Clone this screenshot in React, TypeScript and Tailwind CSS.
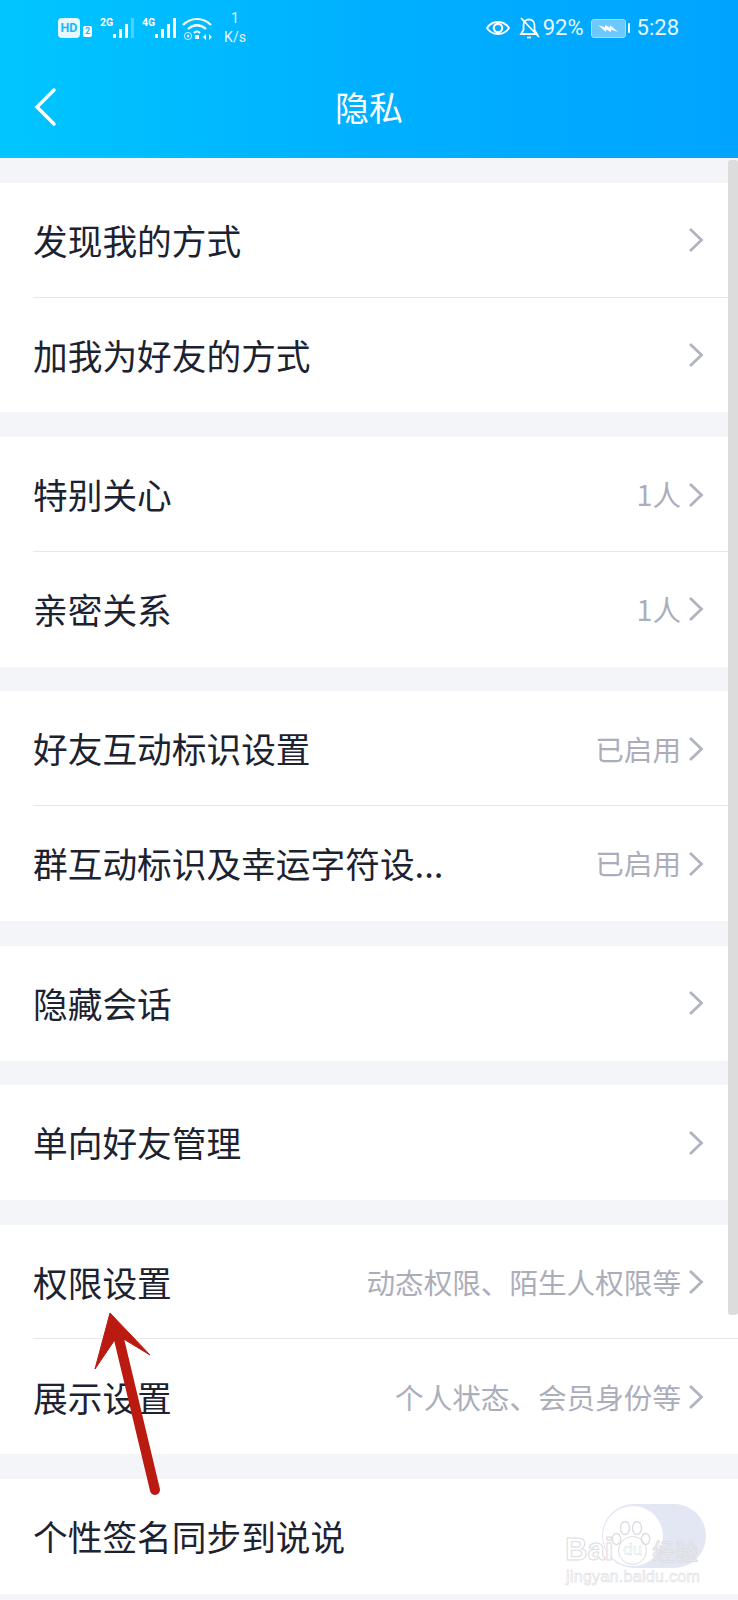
import React from "react";

const cjk = { fontFamily: '"Noto Sans CJK SC", "Noto Sans", sans-serif' };

function Chevron() {
  return (
    <svg width="16" height="26" viewBox="0 0 16 26" fill="none" className="shrink-0">
      <path d="M2 2 L13.5 13 L2 24" stroke="#b0b3c0" strokeWidth="2.8" />
    </svg>
  );
}

function Row({ title, value, divider }: { title: string; value?: string; divider?: boolean }) {
  return (
    <div className="relative flex h-[114.8px] items-center pl-[33px] pr-[34px]">
      <span className="flex-1 text-[34.7px] leading-none text-[#1c2230]">{title}</span>
      {value && <span className="mr-[7px] text-[28.6px] leading-none text-[#abaeba]">{value}</span>}
      <Chevron />
      {divider && <div className="absolute bottom-0 left-[33px] right-0 h-px bg-[#e8e8ec]" />}
    </div>
  );
}

function Group({ children }: { children: React.ReactNode }) {
  return <div className="mt-[24.7px] bg-white">{children}</div>;
}

function Bars({ label, dim }: { label: string; dim: number }) {
  const hs = [4, 9, 14, 20];
  return (
    <div className="flex items-end">
      <span className="mb-[10px] mr-[1px] w-[12px] text-[10.5px] font-bold leading-none text-white" style={{ fontFamily: "Roboto, sans-serif" }}>{label}</span>
      <div className="flex items-end gap-[3px]">
        {hs.map((h, i) => (
          <div key={i} className={i >= 4 - dim ? "w-[3px] bg-white/30" : "w-[3px] bg-white"} style={{ height: h }} />
        ))}
      </div>
    </div>
  );
}

export default function App() {
  return (
    <div className="relative h-[1600px] w-[738px] overflow-hidden bg-[#f3f5f9]" style={cjk}>
      <header className="h-[158.2px] bg-gradient-to-r from-[#00c6ff] via-[#00b0ff] to-[#00a4ff] text-white">
        <div className="flex h-[56px] items-center justify-between pl-[58px] pr-[59px]">
          <div className="flex items-center">
            <div className="flex h-[20px] w-[22px] items-center justify-center rounded-[4px] bg-[#e6f8ff] text-[12.5px] font-bold leading-none text-[#19b8fb]" style={{ fontFamily: "Roboto, sans-serif" }}>HD</div>
            <div className="ml-[3px] mt-[7px] flex h-[11px] w-[9px] items-center justify-center rounded-[2px] bg-white text-[9px] font-bold leading-none text-[#19b8fb]" style={{ fontFamily: "Roboto, sans-serif" }}>2</div>
            <div className="ml-[8px]"><Bars label="2G" dim={1} /></div>
            <div className="ml-[8px]"><Bars label="4G" dim={0} /></div>
            <svg width="32" height="24" viewBox="0 0 32 24" fill="none" stroke="white" className="ml-[5px]">
              <path d="M2 9 C10 1 22 1 30 9" strokeWidth="2.2" />
              <path d="M7 13 C13 8 19 8 25 13" strokeWidth="2.2" />
              <path d="M13 17 C15 15 17 15 19 17" strokeWidth="2" />
              <circle cx="7" cy="20" r="3.6" strokeWidth="1" opacity=".8" />
              <circle cx="7" cy="20" r="1.2" fill="white" stroke="none" />
              <rect x="14" y="19" width="4" height="4" fill="white" stroke="none" />
              <path d="M22 21 l3 -3 v6 z M31 21 l-3 -3 v6 z" fill="white" stroke="none" />
            </svg>
            <div className="-mt-[1px] ml-[10px] flex w-[24px] flex-col items-center text-[14px] leading-[19px] text-[#e4f6ff]" style={{ fontFamily: "Roboto, sans-serif" }}>
              <span>1</span>
              <span>K/s</span>
            </div>
          </div>
          <div className="flex items-center text-[#e9f8ff]" style={{ fontFamily: "Roboto, sans-serif" }}>
            <svg width="24" height="18" viewBox="0 0 24 18" fill="none" stroke="white">
              <path d="M1 9 C6 1 18 1 23 9 C18 17 6 17 1 9 Z" strokeWidth="1.8" />
              <circle cx="12" cy="9" r="4.2" strokeWidth="2.2" />
            </svg>
            <svg width="21" height="22" viewBox="0 0 21 22" fill="none" stroke="white" strokeWidth="1.8" className="ml-[9px]">
              <path d="M2 17 H18 L15.5 13 V8 C15.5 4.5 13 2.5 10 2.5 C7 2.5 4.5 4.5 4.5 8 V13 Z" />
              <path d="M8 20.5 H12" />
              <path d="M2 1 L20 20" />
            </svg>
            <span className="ml-[3px] text-[22px] leading-none">92%</span>
            <div className="ml-[7px] flex items-center">
              <div className="flex h-[19px] w-[35px] items-center justify-center rounded-[3px] border-[1.5px] border-[#9fdcff] bg-[#6cc8ff]">
                <svg width="22" height="9" viewBox="0 0 22 9">
                  <path d="M1 1 L8 3.5 L8 1 L13 3.5 L13 1 L21 8 L14 5.5 L14 8 L9 5.5 L9 8 Z" fill="white" />
                </svg>
              </div>
              <div className="ml-[2px] h-[10px] w-[2px] rounded-sm bg-white" />
            </div>
            <span className="ml-[7px] text-[22px] leading-none">5:28</span>
          </div>
        </div>
        <div className="relative flex h-[102.2px] items-start justify-center">
          <span className="mt-[27px] text-[34px] leading-[48px]">隐私</span>
          <svg width="24" height="40" viewBox="0 0 24 40" fill="none" className="absolute left-[33px] top-[31px]">
            <path d="M21 3 L4 20 L21 37" stroke="white" strokeWidth="3.4" strokeLinecap="round" />
          </svg>
        </div>
      </header>

      <Group>
        <Row title="发现我的方式" divider />
        <Row title="加我为好友的方式" />
      </Group>
      <Group>
        <Row title="特别关心" value="1人" divider />
        <Row title="亲密关系" value="1人" />
      </Group>
      <Group>
        <Row title="好友互动标识设置" value="已启用" divider />
        <Row title="群互动标识及幸运字符设..." value="已启用" />
      </Group>
      <Group>
        <Row title="隐藏会话" />
      </Group>
      <Group>
        <Row title="单向好友管理" />
      </Group>
      <Group>
        <Row title="权限设置" value="动态权限、陌生人权限等" divider />
        <Row title="展示设置" value="个人状态、会员身份等" />
      </Group>
      <Group>
        <div className="flex h-[114.8px] items-center justify-between pl-[33px] pr-[32px]">
          <span className="text-[34.7px] leading-none text-[#1c2230]">个性签名同步到说说</span>
          <div className="flex h-[64px] w-[104px] items-center rounded-full bg-[#e3e6f3] pl-[1px]">
            <div className="h-[60px] w-[60px] rounded-full bg-white" />
          </div>
        </div>
      </Group>

      {/* scrollbar overlay */}
      <div className="absolute left-[728px] top-[160px] h-[1155px] w-[10px] rounded-[3px] bg-[#dcdcdc]" />

      {/* red annotation arrow */}
      <svg width="738" height="1600" viewBox="0 0 738 1600" className="pointer-events-none absolute left-0 top-0">
        <path d="M110 1313 L150 1355 L122 1338 L155 1490 L153 1490 L116 1338 L95 1369 Z" fill="#bb1a10" stroke="#bb1a10" strokeLinejoin="round" />
        <path d="M118 1335 L155 1490" stroke="#bb1a10" strokeWidth="10" strokeLinecap="round" />
      </svg>

      {/* Baidu watermark */}
      <div className="absolute left-[565px] top-[1505px] flex w-[173px] flex-col items-start">
        <svg width="40" height="36" viewBox="0 0 40 36" fill="none" stroke="#dcdde2" strokeWidth="1.4" className="absolute left-[46px] top-[15px]">
          <ellipse cx="14" cy="8" rx="4.5" ry="6.5" />
          <ellipse cx="26" cy="8" rx="4.5" ry="6.5" />
          <ellipse cx="5.5" cy="19" rx="4.2" ry="5.5" />
          <ellipse cx="34.5" cy="19" rx="4.2" ry="5.5" />
        </svg>
        <div className="mt-[25px] flex items-center text-[31px] font-bold leading-[40px] text-white/70 [-webkit-text-stroke:1px_#dcdde2]" style={{ fontFamily: '"Liberation Sans", sans-serif' }}>
          <span>Bai</span>
          <span className="ml-[5px] flex h-[29px] w-[29px] items-center justify-center rounded-full border border-[#dcdde2] bg-white/50 text-[17px] font-normal [-webkit-text-stroke:0.4px_#d8d9de]">du</span>
          <span className="ml-[5px] text-[23px] font-normal" style={cjk}>经验</span>
        </div>
        <span className="-mt-[3px] ml-[1px] text-[16px] leading-[20px] tracking-[0.3px] text-white [-webkit-text-stroke:0.6px_#dcdde2]" style={{ fontFamily: '"Liberation Sans", sans-serif' }}>jingyan.baidu.com</span>
      </div>
    </div>
  );
}
